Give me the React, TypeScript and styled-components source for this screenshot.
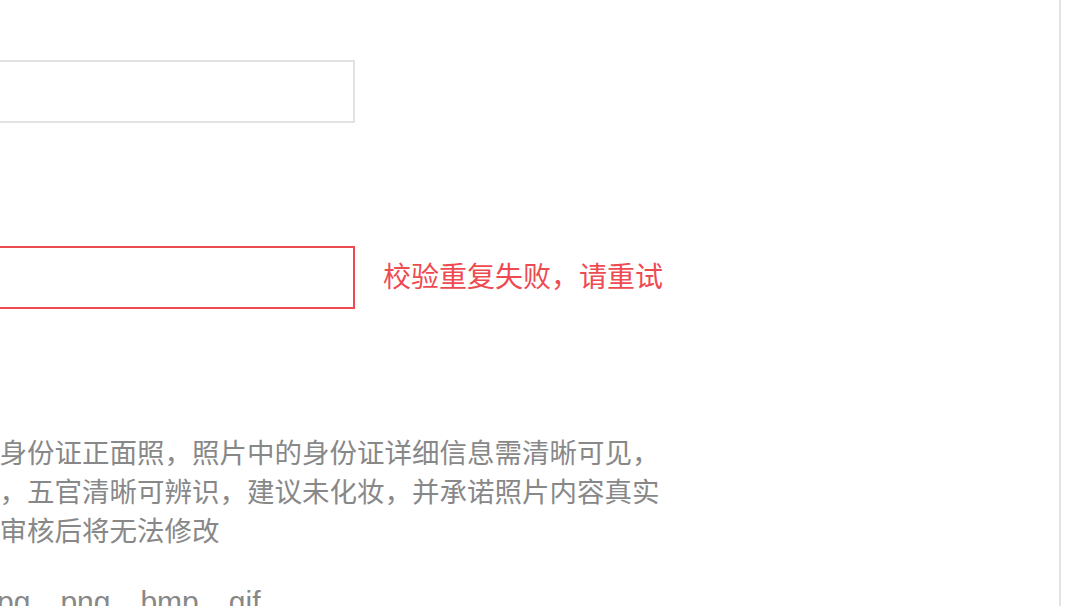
import { FunctionComponent } from "react";
import styled, { createGlobalStyle } from "styled-components";

const GlobalStyle = createGlobalStyle`
  html, body {
    margin: 0;
    padding: 0;
    background: #fff;
    overflow: hidden;
  }
  body {
    font-family: "Liberation Sans", "Noto Sans CJK SC", sans-serif;
  }
`;

const RED = "#ee4a52";

const App: FunctionComponent = () => {
  return (
    <>
      <GlobalStyle />
      <Page>
        <Main>
          <Form>
            <FormRow>
              <Label>真实姓名</Label>
              <Input placeholder="请输入真实姓名" />
            </FormRow>

            <FormRow $gap={123}>
              <Label>身份证号</Label>
              <Input $error placeholder="请输入身份证号" />
              <ErrorText>校验重复失败，请重试</ErrorText>
            </FormRow>

            <FormRow $gap={125} $top>
              <Label>手持照片</Label>
              <Hint>
                <HintLine>请上传您本人手持第二代身份证正面照，照片中的身份证详细信息需清晰可见，</HintLine>
                <HintLine>持证人需露出完整的正脸，五官清晰可辨识，建议未化妆，并承诺照片内容真实</HintLine>
                <HintLine>有效，照片一经提交通过审核后将无法修改</HintLine>
                <HintLine $spaced>
                  大小不超过5M，格式为 <Formats>jpg、png、bmp、gif</Formats>
                </HintLine>
              </Hint>
            </FormRow>
          </Form>
        </Main>
      </Page>
    </>
  );
};

const Page = styled.div`
  display: flex;
  width: 1074px;
  height: 606px;
  overflow: hidden;
  background: #fff;
`;

const Main = styled.div`
  width: 1059px;
  height: 100%;
  flex-shrink: 0;
  overflow: hidden;
  border-right: 2px solid #e3e3e3;
`;

const Form = styled.div`
  display: flex;
  flex-direction: column;
  margin-left: -480px;
  padding-top: 60px;
`;

const FormRow = styled.div<{ $gap?: number; $top?: boolean }>`
  display: flex;
  align-items: ${(p) => (p.$top ? "flex-start" : "center")};
  margin-top: ${(p) => p.$gap ?? 0}px;
`;

const Label = styled.div`
  width: 177px;
  flex-shrink: 0;
  padding-right: 24px;
  box-sizing: border-box;
  text-align: right;
  font-size: 28px;
  color: #333;
`;

const Input = styled.input<{ $error?: boolean }>`
  width: 658px;
  height: 63px;
  flex-shrink: 0;
  box-sizing: border-box;
  padding: 0 20px;
  border: 2px solid ${(p) => (p.$error ? RED : "#e2e2e2")};
  border-radius: 0;
  outline: none;
  background: #fff;
  font-family: inherit;
  font-size: 28px;
  color: #333;

  &::placeholder {
    color: #bbb;
  }
`;

const ErrorText = styled.span`
  margin-left: 28px;
  font-size: 28px;
  line-height: 40px;
  color: ${RED};
  white-space: nowrap;
`;

const Hint = styled.div`
  display: flex;
  flex-direction: column;
  font-size: 27.5px;
  line-height: 39px;
  color: #888;
`;

const HintLine = styled.div<{ $spaced?: boolean }>`
  white-space: nowrap;
  margin-top: ${(p) => (p.$spaced ? 31 : 0)}px;
`;

const Formats = styled.span`
  font-size: 30px;
`;

export default App;
